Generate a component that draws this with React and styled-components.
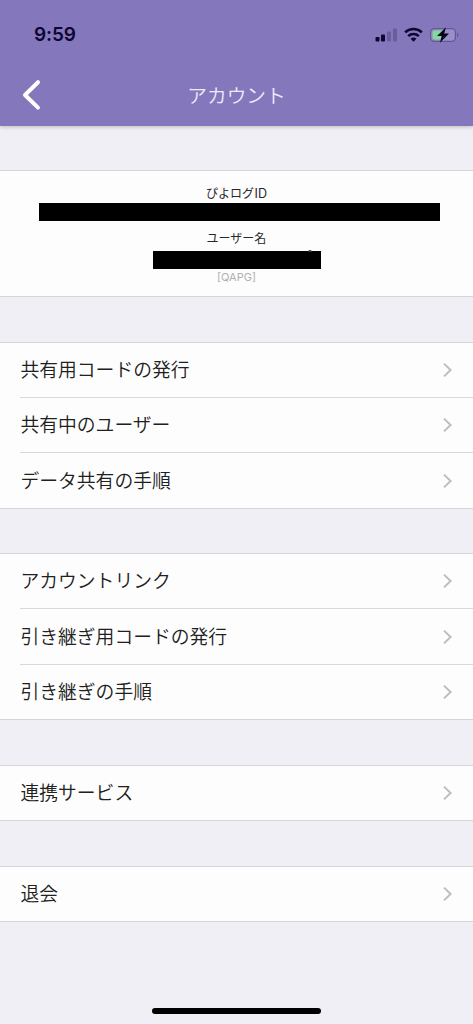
import React from "react";
import styled, { createGlobalStyle } from "styled-components";

const GlobalStyle = createGlobalStyle`
  * { box-sizing: border-box; }
  body {
    margin: 0;
    background: #f0eff5;
    font-family: Inter, "Noto Sans CJK JP", sans-serif;
    color: #202020;
  }
`;

const Screen = styled.div`
  display: flex;
  flex-direction: column;
  width: 473px;
  height: 1024px;
  overflow: hidden;
  background: #f0eff5;
`;

const Header = styled.header`
  height: 126px;
  flex: none;
  background: #8477bb;
  box-shadow: 0 1px 4px rgba(0, 0, 0, 0.22);
`;

const StatusBar = styled.div`
  display: flex;
  align-items: center;
  justify-content: space-between;
  height: 68px;
  padding: 1px 14px 0 34px;
`;

const Clock = styled.span`
  font-size: 19px;
  line-height: 24px;
  font-weight: 600;
  letter-spacing: -0.1px;
  color: #0d0632;
`;

const StatusIcons = styled.svg`
  display: block;
  width: 84px;
  height: 20px;
`;

const NavBar = styled.div`
  display: grid;
  grid-template-columns: 60px 1fr 60px;
  align-items: center;
  height: 54px;
`;

const BackButton = styled.button`
  display: flex;
  border: 0;
  padding: 0 0 0 21px;
  background: none;
`;

const Title = styled.h1`
  margin: 0;
  padding-top: 1px;
  font-size: 19.7px;
  line-height: 28px;
  font-weight: 350;
  text-align: center;
  color: #eeeafa;
`;

const Profile = styled.section`
  display: flex;
  flex-direction: column;
  align-items: center;
  flex: none;
  height: 127px;
  margin-top: 44px;
  padding-top: 14px;
  background: #fdfdfd;
  border: solid #d6d5da;
  border-width: 1px 0;
`;

const Label = styled.div`
  margin-top: ${(p) => p.$top || 0}px;
  font-size: 12px;
  line-height: 18px;
  color: #282828;
`;

const Latin = styled.span`
  margin-left: 0.5px;
  font-size: 12.6px;
`;

const Redaction = styled.div`
  position: relative;
  width: ${(p) => p.$width}px;
  height: 18px;
  margin: ${(p) => p.$margin};
  background: #000;
`;

const Speck = styled.i`
  position: absolute;
  top: -1px;
  right: 9px;
  width: 4px;
  height: 2px;
  border-radius: 2px 2px 0 0;
  background: #333;
`;

const Tag = styled.div`
  font-size: 11px;
  line-height: 16px;
  color: #b0b0b0;
`;

const Group = styled.ul`
  flex: none;
  list-style: none;
  margin: ${(p) => p.$gap}px 0 0;
  padding: 0;
  background: #fdfdfd;
  border-top: 1px solid #d6d5da;
  border-bottom: 1px solid #d6d5da;
`;

const Row = styled.li`
  display: flex;
  align-items: center;
  justify-content: space-between;
  height: ${(p) => p.$height}px;
  margin-left: 20px;
  padding-right: 19px;
  font-size: 18.8px;
  line-height: 28px;
  font-weight: 350;

  & + & {
    border-top: 1px solid #d9d9dc;
  }
`;

const RowLabel = styled.span`
  padding: 2px 0 0 0.5px;
`;

const HomeIndicator = styled.div`
  flex: none;
  width: 169px;
  height: 6px;
  margin: auto auto 10px 152px;
  border-radius: 3px;
  background: #000;
`;

const Chevron = () => (
  <svg width="12" height="16" viewBox="0 0 12 16" fill="none">
    <path d="M2 1.6 8.6 8 2 14.4" stroke="#bdbdbf" strokeWidth="2" />
  </svg>
);

const groups = [
  { gap: 45, rows: [["共有用コードの発行", 54], ["共有中のユーザー", 55], ["データ共有の手順", 56]] },
  { gap: 44, rows: [["アカウントリンク", 54], ["引き継ぎ用コードの発行", 56], ["引き継ぎの手順", 55]] },
  { gap: 45, rows: [["連携サービス", 54]] },
  { gap: 45, rows: [["退会", 54]] },
];

export default function App() {
  return (
    <>
      <GlobalStyle />
      <Screen>
        <Header>
          <StatusBar>
            <Clock>9:59</Clock>
            <StatusIcons viewBox="0 0 84 20">
              <g fill="#0d0632">
                <rect x="0.5" y="12" width="4" height="4.5" rx="1" />
                <rect x="6" y="9.5" width="4" height="7" rx="1" />
                <g opacity="0.22">
                  <rect x="12" y="6.5" width="4" height="10" rx="1" />
                  <rect x="18" y="3.5" width="4" height="13" rx="1" />
                </g>
              </g>
              <g fill="none" stroke="#0d0632" strokeWidth="2.6">
                <path d="M30.2 7.4a12 12 0 0 1 16.6 0" />
                <path d="M33.2 11.1a7.7 7.7 0 0 1 10.6 0" />
              </g>
              <path d="M35.6 13.8a4.4 4.4 0 0 1 5.8 0L38.5 16.8z" fill="#0d0632" />
              <rect x="55.6" y="3.6" width="24.8" height="12.8" rx="3.8" fill="#9a8fca" stroke="#625891" strokeWidth="1.2" />
              <path d="M60 5.5h9v9h-9a2.3 2.3 0 0 1-2.3-2.3V7.8A2.3 2.3 0 0 1 60 5.5z" fill="#82d99a" />
              <path d="M82 7.8c2 .8 2 3.6 0 4.4z" fill="#625891" />
              <path d="M71 2.2 62 11h4.6l-1.6 6.8 9-9.4h-4.8z" fill="#09051c" />
            </StatusIcons>
          </StatusBar>
          <NavBar>
            <BackButton aria-label="戻る">
              <svg width="22" height="32" viewBox="0 0 22 32" fill="none">
                <path d="M17 3.2 4 16l13 12.6" stroke="#fff" strokeWidth="4" strokeLinecap="round" strokeLinejoin="round" />
              </svg>
            </BackButton>
            <Title>アカウント</Title>
          </NavBar>
        </Header>
        <Profile>
          <Label>
            ぴよログ<Latin>ID</Latin>
          </Label>
          <Redaction $width={401} $margin="0 0 0 6px" />
          <Label $top={9}>ユーザー名</Label>
          <Redaction $width={168} $margin="3px 0 0">
            <Speck />
          </Redaction>
          <Tag>[QAPG]</Tag>
        </Profile>
        {groups.map(({ gap, rows }) => (
          <Group key={rows[0][0]} $gap={gap}>
            {rows.map(([label, height]) => (
              <Row key={label} $height={height}>
                <RowLabel>{label}</RowLabel>
                <Chevron />
              </Row>
            ))}
          </Group>
        ))}
        <HomeIndicator />
      </Screen>
    </>
  );
}
